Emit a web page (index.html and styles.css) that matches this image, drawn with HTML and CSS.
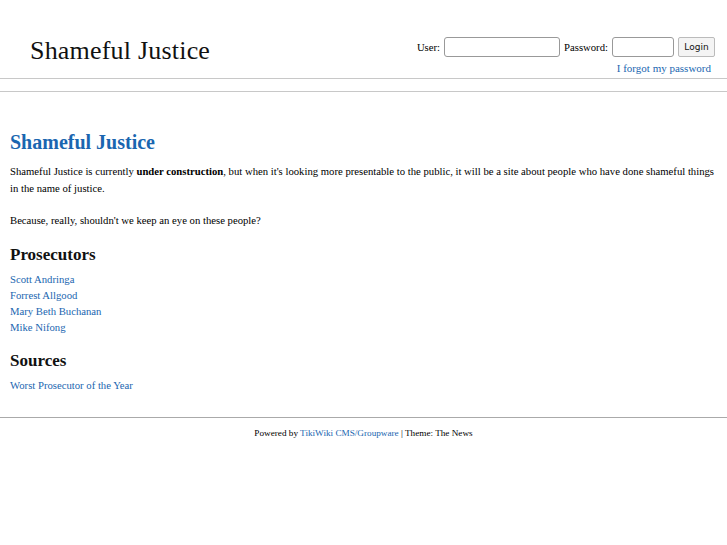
FILE: index.html
```html
<!DOCTYPE html>
<html>
<head>
<meta charset="utf-8">
<title>Shameful Justice</title>
<link rel="stylesheet" href="styles.css">
</head>
<body>
<div class="header">
  <div class="site-title">Shameful Justice</div>
  <div class="login">
    <div class="login-row">
      <label class="lbl">User:</label>
      <input class="field field-user" type="text">
      <label class="lbl">Password:</label>
      <input class="field field-pass" type="password">
      <button class="btn">Login</button>
    </div>
    <a class="forgot" href="#">I forgot my password</a>
  </div>
</div>
<div class="bar"></div>
<div class="content">
  <h1 class="page-title">Shameful Justice</h1>
  <p class="text">Shameful Justice is currently <b>under construction</b>, but when it's looking more presentable to the public, it will be a site about people who have done shameful things in the name of justice.</p>
  <p class="text">Because, really, shouldn't we keep an eye on these people?</p>
  <h2 class="section">Prosecutors</h2>
  <ul class="links">
    <li><a href="#">Scott Andringa</a></li>
    <li><a href="#">Forrest Allgood</a></li>
    <li><a href="#">Mary Beth Buchanan</a></li>
    <li><a href="#">Mike Nifong</a></li>
  </ul>
  <h2 class="section">Sources</h2>
  <ul class="links">
    <li><a href="#">Worst Prosecutor of the Year</a></li>
  </ul>
</div>
<div class="footer">Powered by <a href="#">TikiWiki CMS/Groupware</a> | Theme: The News</div>
</body>
</html>
```
FILE: styles.css
```css
html, body {
  margin: 0;
  padding: 0;
  background: #fff;
}
body {
  font-family: "Liberation Serif", "Times New Roman", serif;
  color: #000;
  font-size: 10.7px;
}
a {
  color: #1a66b0;
  text-decoration: none;
}
.header {
  display: flex;
  justify-content: space-between;
  align-items: flex-start;
  padding: 0 12px 0 30px;
  height: 78px;
  border-bottom: 1px solid #c8c8c8;
}
.site-title {
  font-size: 26px;
  line-height: 30px;
  letter-spacing: 0.2px;
  margin-top: 36px;
  color: #111;
}
.login {
  display: flex;
  flex-direction: column;
  align-items: flex-end;
  margin-top: 36px;
}
.login-row {
  display: flex;
  align-items: center;
  height: 21px;
}
.lbl {
  font-size: 10.7px;
  margin-right: 4px;
}
.field {
  box-sizing: border-box;
  height: 20px;
  border: 1px solid #999;
  border-radius: 3px;
  margin: 0 4px 0 0;
  padding: 0;
  background: #fff;
}
.field-user { width: 116px; }
.field-pass { width: 62px; }
.btn {
  box-sizing: border-box;
  height: 20px;
  width: 37px;
  margin: 0;
  padding: 0;
  font-family: "DejaVu Sans", "Liberation Sans", sans-serif;
  font-size: 9px;
  color: #111;
  background: #f4f4f4;
  border: 1px solid #bbb;
  border-radius: 2px;
}
.forgot {
  font-size: 11px;
  line-height: 14px;
  margin-top: 4px;
  margin-right: 4px;
}
.bar {
  height: 12px;
  border-bottom: 1px solid #c8c8c8;
}
.content {
  padding: 0 10px 23px 10px;
}
.page-title {
  font-size: 20px;
  line-height: 24px;
  color: #1a66b0;
  margin: 38px 0 9px 0;
}
.text {
  margin: 0 0 15px 0;
  line-height: 17px;
}
.section {
  font-size: 17px;
  line-height: 20px;
  color: #111;
  margin: 16px 0 6px 0;
}
.links {
  list-style: none;
  margin: 0 0 1px 0;
  padding: 0;
}
.links li {
  line-height: 16px;
}
.footer {
  border-top: 1px solid #aaa;
  text-align: center;
  font-size: 9.2px;
  padding-top: 10px;
}
```
